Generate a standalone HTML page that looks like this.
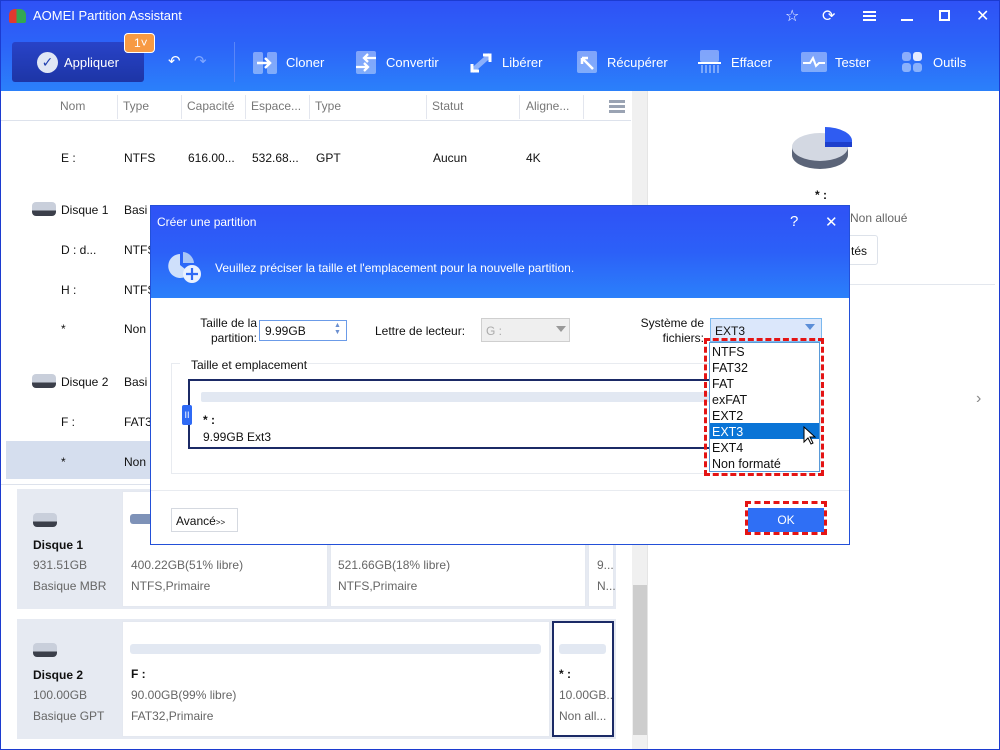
<!DOCTYPE html>
<html><head><meta charset="utf-8"><style>
*{box-sizing:border-box;margin:0;padding:0}
body{width:1000px;height:750px;overflow:hidden;font-family:"Liberation Sans","DejaVu Sans",sans-serif;font-size:12px;color:#111;background:#fff;position:relative}
.a{position:absolute}
.top{left:0;top:0;width:1000px;height:91px;background:linear-gradient(#2f52f6,#2c64f8 50%,#2b80fa);border:1px solid #1c3bd0;border-bottom:none}
.wt{color:#fff;font-size:13px}
.tb{color:#fff;font-size:13px;top:55px}
.ico{background:rgba(255,255,255,.45);border-radius:3px}
.hdr{color:#777;font-size:12px;top:99px}
.sep{top:95px;width:1px;height:24px;background:#e3e6ee}
.row{font-size:12px;color:#111}
.card{background:#fff;border:1px solid #e4e8f0}
.gray{color:#666}
</style></head><body>
<div class="a top"></div>
<div class="a" style="left:9px;top:9px;width:17px;height:14px;border-radius:6px 6px 2px 2px;background:linear-gradient(90deg,#e03a2f 45%,#33a852 45%)"></div>
<div class="a wt" style="left:33px;top:8px">AOMEI Partition Assistant</div>
<div class="a wt" style="left:785px;top:6px;font-size:16px">☆</div>
<div class="a wt" style="left:822px;top:6px;font-size:16px">⟳</div>
<div class="a" style="left:863px;top:11px;width:13px;height:2px;background:#fff;box-shadow:0 4px #fff,0 8px #fff"></div>
<div class="a" style="left:901px;top:19px;width:12px;height:2px;background:#fff"></div>
<div class="a" style="left:939px;top:10px;width:11px;height:11px;border:2px solid #fff"></div>
<div class="a wt" style="left:976px;top:6px;font-size:16px">✕</div>
<div class="a" style="left:12px;top:42px;width:132px;height:40px;background:linear-gradient(#2843c8,#1d35a6);border-radius:3px"></div>
<div class="a" style="left:37px;top:52px;width:21px;height:21px;border-radius:50%;background:#dfe6f5;color:#2040b0;font-size:14px;text-align:center;line-height:21px;font-weight:bold">✓</div>
<div class="a tb" style="left:64px;top:55px">Appliquer</div>
<div class="a" style="left:124px;top:33px;width:31px;height:20px;background:#f79a43;border:1px solid #fff;border-radius:4px;color:#fff;font-size:12px;padding-left:9px;line-height:18px">1˅</div>
<div class="a wt" style="left:168px;top:52px;font-size:15px">↶</div>
<div class="a" style="left:194px;top:52px;font-size:15px;color:#7fa6ff">↷</div>
<div class="a" style="left:234px;top:42px;width:1px;height:40px;background:#5a86f8"></div>
<svg class="a" style="left:253px;top:52px" width="24" height="22"><rect x="0" y="0" width="10" height="22" rx="2" fill="#fff" opacity=".4"/><rect x="14" y="0" width="10" height="22" rx="2" fill="#fff" opacity=".4"/><path d="M4 11h12M12 6l5 5-5 5" stroke="#fff" stroke-width="2.5" fill="none"/></svg>
<div class="a tb" style="left:286px">Cloner</div>
<svg class="a" style="left:356px;top:51px" width="20" height="23"><rect width="20" height="23" rx="2" fill="#fff" opacity=".4"/><path d="M20 7H9M12 3L8 7l4 4M0 16h11M8 12l4 4-4 4" stroke="#fff" stroke-width="2.3" fill="none"/></svg>
<div class="a tb" style="left:386px">Convertir</div>
<svg class="a" style="left:470px;top:53px" width="22" height="20"><path d="M2 18L20 2" stroke="#fff" stroke-opacity=".45" stroke-width="5"/><path d="M2 11v7h7M13 2h7v7" stroke="#fff" stroke-width="3" fill="none"/></svg>
<div class="a tb" style="left:502px">Libérer</div>
<svg class="a" style="left:577px;top:51px" width="22" height="23"><rect width="20" height="22" rx="2" fill="#fff" opacity=".4"/><path d="M5 7l11 11M5 7v6M5 7h6" stroke="#fff" stroke-width="2.5" fill="none"/></svg>
<div class="a tb" style="left:607px">Récupérer</div>
<svg class="a" style="left:698px;top:50px" width="24" height="24"><rect x="2" y="0" width="19" height="12" rx="2" fill="#fff" opacity=".4"/><rect x="0" y="12" width="23" height="2" fill="#fff"/><path d="M4 15v8M8 15v8M12 15v8M16 15v8M20 15v8" stroke="#fff" stroke-opacity=".5" stroke-width="1.5"/></svg>
<div class="a tb" style="left:731px">Effacer</div>
<svg class="a" style="left:801px;top:52px" width="26" height="20"><rect width="26" height="20" rx="2" fill="#fff" opacity=".4"/><path d="M2 11h7l3-5 3 8 3-3h6" stroke="#fff" stroke-width="2" fill="none"/></svg>
<div class="a tb" style="left:835px">Tester</div>
<div class="a" style="left:902px;top:52px;width:20px;height:20px"><div class="a ico" style="left:0;top:0;width:9px;height:9px"></div><div class="a ico" style="left:11px;top:0;width:9px;height:9px;background:#e5ebff"></div><div class="a ico" style="left:0;top:11px;width:9px;height:9px"></div><div class="a ico" style="left:11px;top:11px;width:9px;height:9px"></div></div>
<div class="a tb" style="left:933px">Outils</div>
<div class="a" style="left:0;top:91px;width:1px;height:659px;background:#1c3bd0"></div>
<div class="a" style="left:999px;top:91px;width:1px;height:659px;background:#1c3bd0"></div>
<div class="a" style="left:0;top:749px;width:1000px;height:1px;background:#1c3bd0"></div>
<div class="a hdr" style="left:60px">Nom</div><div class="a sep" style="left:117px"></div>
<div class="a hdr" style="left:123px">Type</div><div class="a sep" style="left:181px"></div>
<div class="a hdr" style="left:187px">Capacité</div><div class="a sep" style="left:245px"></div>
<div class="a hdr" style="left:251px">Espace...</div><div class="a sep" style="left:309px"></div>
<div class="a hdr" style="left:315px">Type</div><div class="a sep" style="left:426px"></div>
<div class="a hdr" style="left:432px">Statut</div><div class="a sep" style="left:519px"></div>
<div class="a hdr" style="left:526px">Aligne...</div><div class="a sep" style="left:583px"></div>
<div class="a" style="left:609px;top:100px;width:16px;height:3px;background:#9aa3b3;box-shadow:0 5px #9aa3b3,0 10px #9aa3b3"></div>
<div class="a" style="left:1px;top:120px;width:630px;height:1px;background:#dde2ec"></div>
<div class="a" style="left:632px;top:91px;width:16px;height:658px;background:#f0f0f0"></div>
<div class="a" style="left:633px;top:585px;width:14px;height:150px;background:#cdcdcd"></div>
<div class="a" style="left:647px;top:91px;width:1px;height:658px;background:#e5e5e5"></div>
<div class="a row" style="left:61px;top:151px">E :</div><div class="a row" style="left:124px;top:151px">NTFS</div><div class="a row" style="left:188px;top:151px">616.00...</div><div class="a row" style="left:252px;top:151px">532.68...</div><div class="a row" style="left:316px;top:151px">GPT</div><div class="a row" style="left:433px;top:151px">Aucun</div><div class="a row" style="left:526px;top:151px">4K</div>
<div class="a" style="left:32px;top:202px;width:24px;height:14px;border-radius:4px;background:linear-gradient(#c9cfdb 60%,#3b3f4a 60%)"></div>
<div class="a row" style="left:61px;top:203px">Disque 1</div><div class="a row" style="left:124px;top:203px">Basi</div>
<div class="a row" style="left:61px;top:243px">D : d...</div><div class="a row" style="left:124px;top:243px">NTFS</div>
<div class="a row" style="left:61px;top:283px">H :</div><div class="a row" style="left:124px;top:283px">NTFS</div>
<div class="a row" style="left:61px;top:322px">*</div><div class="a row" style="left:124px;top:322px">Non</div>
<div class="a" style="left:32px;top:374px;width:24px;height:14px;border-radius:4px;background:linear-gradient(#c9cfdb 60%,#3b3f4a 60%)"></div>
<div class="a row" style="left:61px;top:375px">Disque 2</div><div class="a row" style="left:124px;top:375px">Basi</div>
<div class="a row" style="left:61px;top:415px">F :</div><div class="a row" style="left:124px;top:415px">FAT3</div>
<div class="a" style="left:6px;top:441px;width:146px;height:38px;background:#d5deee"></div>
<div class="a row" style="left:61px;top:455px">*</div><div class="a row" style="left:124px;top:455px">Non</div>
<div class="a" style="left:1px;top:484px;width:631px;height:1px;background:#dde2ec"></div>
<div class="a" style="left:17px;top:489px;width:599px;height:120px;background:#e6eaf2"></div>
<div class="a card" style="left:122px;top:491px;width:206px;height:116px"></div>
<div class="a card" style="left:330px;top:491px;width:256px;height:116px"></div>
<div class="a card" style="left:588px;top:491px;width:26px;height:116px"></div>
<div class="a" style="left:130px;top:514px;width:40px;height:10px;border-radius:3px;background:#7e92b8"></div>
<div class="a" style="left:33px;top:513px;width:24px;height:14px;border-radius:4px;background:linear-gradient(#c9cfdb 60%,#3b3f4a 60%)"></div>
<div class="a" style="left:33px;top:538px;font-weight:bold">Disque 1</div>
<div class="a gray" style="left:33px;top:558px">931.51GB</div>
<div class="a gray" style="left:33px;top:579px">Basique MBR</div>
<div class="a gray" style="left:131px;top:558px">400.22GB(51% libre)</div>
<div class="a gray" style="left:131px;top:579px">NTFS,Primaire</div>
<div class="a gray" style="left:338px;top:558px">521.66GB(18% libre)</div>
<div class="a gray" style="left:338px;top:579px">NTFS,Primaire</div>
<div class="a gray" style="left:597px;top:558px">9...</div><div class="a gray" style="left:597px;top:579px">N...</div>
<div class="a" style="left:17px;top:619px;width:599px;height:120px;background:#e6eaf2"></div>
<div class="a card" style="left:122px;top:621px;width:428px;height:116px"></div>
<div class="a" style="left:552px;top:621px;width:62px;height:116px;background:#fff;border:2px solid #1b2a66"></div>
<div class="a" style="left:130px;top:644px;width:411px;height:10px;border-radius:3px;background:#e2e8f2"></div>
<div class="a" style="left:559px;top:644px;width:47px;height:10px;border-radius:3px;background:#e2e8f2"></div>
<div class="a" style="left:33px;top:643px;width:24px;height:14px;border-radius:4px;background:linear-gradient(#c9cfdb 60%,#3b3f4a 60%)"></div>
<div class="a" style="left:33px;top:668px;font-weight:bold">Disque 2</div>
<div class="a gray" style="left:33px;top:688px">100.00GB</div>
<div class="a gray" style="left:33px;top:709px">Basique GPT</div>
<div class="a" style="left:131px;top:667px;font-weight:bold">F :</div>
<div class="a gray" style="left:131px;top:688px">90.00GB(99% libre)</div>
<div class="a gray" style="left:131px;top:709px">FAT32,Primaire</div>
<div class="a" style="left:559px;top:667px;font-weight:bold">* :</div>
<div class="a gray" style="left:559px;top:688px">10.00GB..</div>
<div class="a gray" style="left:559px;top:709px">Non all...</div>
<svg class="a" style="left:790px;top:125px" width="66" height="50"><ellipse cx="30" cy="30" rx="28" ry="14" fill="#5b6478"/><rect x="2" y="22" width="56" height="8" fill="#5b6478"/><ellipse cx="30" cy="22" rx="28" ry="14" fill="#d3d8e2"/><path d="M35 2 A28 14 0 0 1 62 17 L35 17Z" fill="#2f5cf2"/><rect x="35" y="17" width="27" height="5" fill="#1d3fcc"/></svg>
<div class="a" style="left:815px;top:188px;font-weight:bold">* :</div>
<div class="a gray" style="left:850px;top:211px">Non alloué</div>
<div class="a" style="left:840px;top:235px;width:38px;height:30px;border:1px solid #dde2ea;border-radius:3px;padding:8px 0 0 10px">tés</div>
<div class="a" style="left:650px;top:284px;width:345px;height:1px;background:#e3e7ee"></div>
<div class="a" style="left:976px;top:390px;color:#888;font-size:16px">›</div>
<div class="a" style="left:150px;top:205px;width:700px;height:340px;background:#fff;border:1px solid #2350d8"></div>
<div class="a" style="left:151px;top:206px;width:698px;height:92px;background:linear-gradient(#2f52f6,#2c60f8 50%,#2b80fa)"></div>
<div class="a wt" style="left:157px;top:215px;font-size:12px">Créer une partition</div>
<div class="a wt" style="left:790px;top:213px;font-size:15px">?</div>
<div class="a wt" style="left:825px;top:213px;font-size:15px">✕</div>
<svg class="a" style="left:166px;top:251px" width="36" height="34"><path d="M14 3 A12 12 0 1 0 24 22 L14 14Z" fill="#cfe0fb"/><path d="M17 1 A12 12 0 0 1 28 12 L17 12Z" fill="#a9c6f7"/><circle cx="26" cy="23" r="9" fill="#e9f1ff"/><path d="M26 17v12M20 23h12" stroke="#2f6af5" stroke-width="2.2"/></svg>
<div class="a wt" style="left:215px;top:261px;font-size:12px">Veuillez préciser la taille et l'emplacement pour la nouvelle partition.</div>
<div class="a" style="left:193px;top:316px;text-align:right;width:64px;line-height:15px">Taille de la<br>partition:</div>
<div class="a" style="left:259px;top:320px;width:88px;height:21px;border:1px solid #6b9be8;padding:3px 5px">9.99GB</div>
<div class="a" style="left:334px;top:322px;color:#6b8fd0;font-size:7px;line-height:7px">▲<br>▼</div>
<div class="a" style="left:375px;top:324px">Lettre de lecteur:</div>
<div class="a" style="left:481px;top:318px;width:89px;height:24px;background:#efefef;border:1px solid #cfcfcf;padding:5px 4px;color:#aaa">G :</div>
<div class="a" style="left:556px;top:326px;border:5px solid transparent;border-top:6px solid #999"></div>
<div class="a" style="left:630px;top:316px;width:74px;text-align:right;line-height:15px">Système de<br>fichiers:</div>
<div class="a" style="left:710px;top:318px;width:112px;height:24px;background:#dbe7fb;border:1px solid #7bb8ee;padding:5px 4px">EXT3</div>
<div class="a" style="left:805px;top:324px;border:5px solid transparent;border-top:6px solid #5b8ed8"></div>
<div class="a" style="left:171px;top:363px;width:650px;height:111px;border:1px solid #e8ebf0"></div>
<div class="a" style="left:180px;top:358px;background:#fff;padding:0 0 0 11px">Taille et emplacement</div>
<div class="a" style="left:188px;top:379px;width:530px;height:70px;border:2px solid #1b2a66;background:#fff"></div>
<div class="a" style="left:201px;top:392px;width:510px;height:10px;background:#e2e8f2;border-radius:2px"></div>
<div class="a" style="left:182px;top:405px;width:10px;height:20px;background:#2f6af5;border-radius:2px;color:#fff;font-size:9px;text-align:center;line-height:20px">II</div>
<div class="a" style="left:203px;top:413px;font-weight:bold">* :</div>
<div class="a" style="left:203px;top:430px">9.99GB Ext3</div>
<div class="a" style="left:704px;top:338px;width:120px;height:138px;border:3px dashed #e41414"></div>
<div class="a" style="left:709px;top:342px;width:111px;height:130px;background:#fff;border:1px solid #5a9ad8"></div>
<div class="a" style="left:710px;top:423px;width:109px;height:16px;background:#0a74d6"></div>
<div class="a" style="left:712px;top:344px;line-height:16px;font-size:12.5px">NTFS<br>FAT32<br>FAT<br>exFAT<br>EXT2<br><span style="color:#fff">EXT3</span><br>EXT4<br>Non formaté</div>
<svg class="a" style="left:803px;top:426px" width="14" height="20"><path d="M1 1v15l4-4 3 6 2-1-3-6h5Z" fill="#fff" stroke="#000"/></svg>
<div class="a" style="left:151px;top:490px;width:698px;height:1px;background:#e8ebf0"></div>
<div class="a" style="left:171px;top:508px;width:67px;height:24px;border:1px solid #d5d9e0;padding:5px 4px;font-size:12px">Avancé<span style="font-size:8px">&gt;&gt;</span></div>
<div class="a" style="left:745px;top:501px;width:82px;height:34px;border:3px dashed #e41414"></div>
<div class="a" style="left:748px;top:508px;width:76px;height:24px;background:#2f6ff5;color:#fff;text-align:center;line-height:24px">OK</div>
</body></html>
